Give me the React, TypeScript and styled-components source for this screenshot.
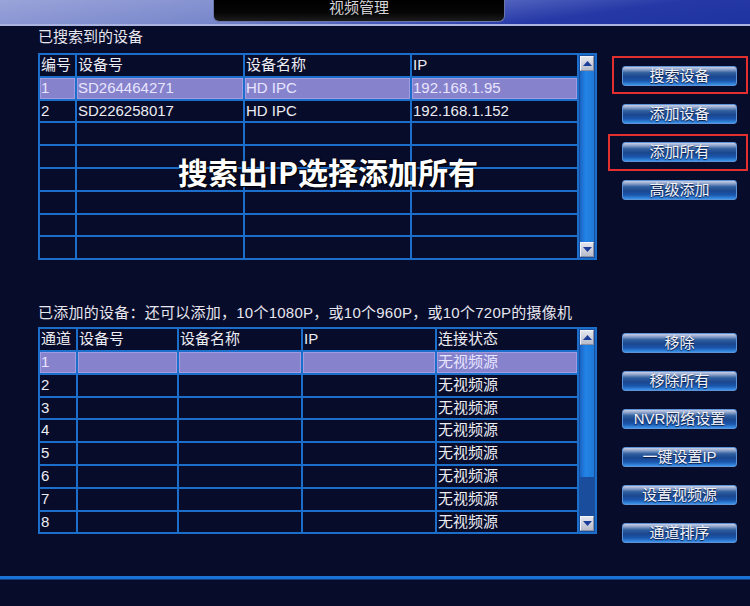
import React from "react";
import styled, { createGlobalStyle } from "styled-components";

const GlobalStyle = createGlobalStyle`
  html, body {
    margin: 0;
    padding: 0;
    background: #080c2b;
    overflow: hidden;
  }
  body {
    font-family: "Liberation Sans", "Noto Sans CJK SC", sans-serif;
  }
`;

const LINE = "#1b6fca";
const FONT = `"Liberation Sans", "Noto Sans CJK SC", sans-serif`;

const Page = styled.div`
  width: 750px;
  height: 606px;
  background: #080c2b;
  display: flex;
  flex-direction: column;
  overflow: hidden;
`;

const Header = styled.div`
  height: 24px;
  flex-shrink: 0;
  padding-left: 213px;
  background: linear-gradient(172deg, #9aa4da 0%, #7887cb 40%, #4a5cba 58%, #2538a6 75%, #1f33a0 100%);
  border-bottom: 2px solid #aab3e0;
  display: flex;
  align-items: flex-start;
`;

const TitleTab = styled.div`
  width: 292px;
  height: 22px;
  box-sizing: border-box;
  background: linear-gradient(to bottom, #000 0%, #050505 60%, #1c1c1e 100%);
  border: 1px solid #6a76a8;
  border-top: none;
  border-radius: 0 0 6px 6px;
  display: flex;
  justify-content: center;
  color: #d4d4d8;
  font-family: ${FONT};
  font-size: 15px;
  line-height: 15px;
`;

const Content = styled.div`
  padding: 1px 0 0 38px;
  display: flex;
  flex-direction: column;
`;

const Section = styled.div<{ $top: number }>`
  display: flex;
  align-items: flex-start;
  margin-top: ${(p) => p.$top}px;
`;

const LeftColumn = styled.div`
  width: 559px;
  display: flex;
  flex-direction: column;
`;

const SectionLabel = styled.div<{ $gap: number; $spacing?: number }>`
  height: 20px;
  line-height: 20px;
  margin-bottom: ${(p) => p.$gap}px;
  color: #e6e6ee;
  font-family: ${FONT};
  font-size: 15px;
  letter-spacing: ${(p) => p.$spacing ?? 0}px;
  white-space: nowrap;
`;

const TableFrame = styled.div`
  position: relative;
  display: flex;
  align-items: stretch;
`;

const Grid = styled.div<{ $cols: string }>`
  width: 541px;
  box-sizing: border-box;
  display: grid;
  grid-template-columns: ${(p) => p.$cols};
  grid-auto-rows: 20.8px;
  gap: 2px;
  padding: 2px;
  background: ${LINE};
`;

const Cell = styled.div<{ $selected?: boolean }>`
  background: ${(p) => (p.$selected ? "#8782cc" : "#080c2b")};
  box-shadow: ${(p) => (p.$selected ? "inset 0 0 0 1px #a19ce2" : "none")};
  color: ${(p) => (p.$selected ? "#e8e6ff" : "#ececf2")};
  font-family: ${FONT};
  font-size: 15px;
  line-height: 20.8px;
  padding-left: 1px;
  white-space: nowrap;
  overflow: hidden;
`;

const ScrollBar = styled.div`
  width: 18px;
  box-sizing: border-box;
  border: 2px solid ${LINE};
  border-left: none;
  background: #1a4e9c;
  display: flex;
  flex-direction: column;
  padding: 1px;
`;

const ScrollButton = styled.div`
  height: 15px;
  flex-shrink: 0;
  background: linear-gradient(to bottom, #e4e6ee, #b8bccb);
  border: 1px solid #f4f4f8;
  border-right-color: #8a8ea0;
  border-bottom-color: #8a8ea0;
  box-sizing: border-box;
  display: flex;
  align-items: center;
  justify-content: center;
`;

const Track = styled.div`
  flex: 1;
  display: flex;
  flex-direction: column;
`;

const Thumb = styled.div<{ $size?: number }>`
  ${(p) => (p.$size ? `height: ${p.$size}px;` : "flex: 1;")}
  background: linear-gradient(to right, #1a64c4, #2383e6 40%, #1f7ad8);
`;

const Overlay = styled.div`
  position: absolute;
  left: 140px;
  top: 103px;
  color: #ffffff;
  font-family: "Noto Sans CJK SC", sans-serif;
  font-weight: 700;
  font-size: 30px;
  line-height: 30px;
  white-space: nowrap;
  text-shadow: 0 0 2px #000, 1px 1px 1px #000;
  pointer-events: none;
`;

const ButtonColumn = styled.div<{ $top: number }>`
  margin-left: 25px;
  padding-top: ${(p) => p.$top}px;
  display: flex;
  flex-direction: column;
  gap: 18px;
`;

const ButtonSlot = styled.div`
  position: relative;
`;

const ActionButton = styled.div`
  width: 115px;
  height: 20px;
  box-sizing: border-box;
  border: 1px solid #5f93d8;
  border-radius: 3px;
  background: linear-gradient(
    to bottom,
    #c8d0e4 0%,
    #8ea3cc 14%,
    #31609f 32%,
    #1a468f 55%,
    #1b57ae 78%,
    #3b93ea 100%
  );
  color: #f2f4fa;
  font-family: ${FONT};
  font-size: 15px;
  line-height: 18px;
  text-align: center;
  text-shadow: 0 1px 1px #0a1a40;
  white-space: nowrap;
`;

const Highlight = styled.div<{ $t: number; $r: number; $b: number; $l: number }>`
  position: absolute;
  top: -${(p) => p.$t}px;
  right: -${(p) => p.$r}px;
  bottom: -${(p) => p.$b}px;
  left: -${(p) => p.$l}px;
  border: 2px solid #e2302e;
  pointer-events: none;
`;

const Footer = styled.div`
  margin-top: 33px;
  height: 3px;
  background: #1c72d2;
  box-shadow: 0 1px 0 #0e3d80;
`;

const Arrow = ({ up }: { up?: boolean }) => (
  <svg width="9" height="5" viewBox="0 0 9 5">
    <polygon points={up ? "0,5 9,5 4.5,0" : "0,0 9,0 4.5,5"} fill="#1c3c9a" />
  </svg>
);

type TableProps = {
  cols: string;
  header: string[];
  rows: string[][];
  selected: number;
  thumb?: number;
  children?: React.ReactNode;
};

function DataTable({ cols, header, rows, selected, thumb, children }: TableProps) {
  return (
    <TableFrame>
      <Grid $cols={cols}>
        {header.map((h, i) => (
          <Cell key={`h${i}`}>{h}</Cell>
        ))}
        {rows.map((row, r) =>
          row.map((v, c) => (
            <Cell key={`${r}-${c}`} $selected={r === selected}>
              {v}
            </Cell>
          ))
        )}
      </Grid>
      <ScrollBar>
        <ScrollButton>
          <Arrow up />
        </ScrollButton>
        <Track>
          <Thumb $size={thumb} />
        </Track>
        <ScrollButton>
          <Arrow />
        </ScrollButton>
      </ScrollBar>
      {children}
    </TableFrame>
  );
}

const searched: string[][] = [
  ["1", "SD264464271", "HD IPC", "192.168.1.95"],
  ["2", "SD226258017", "HD IPC", "192.168.1.152"],
  ...Array.from({ length: 6 }, () => ["", "", "", ""]),
];

const added: string[][] = Array.from({ length: 8 }, (_, i) => [
  String(i + 1),
  "",
  "",
  "",
  "无视频源",
]);

const topButtons = [
  { label: "搜索设备", mark: { t: 10, r: 11, b: 8, l: 10 } },
  { label: "添加设备" },
  { label: "添加所有", mark: { t: 8, r: 11, b: 9, l: 14 } },
  { label: "高级添加" },
];

const bottomButtons = ["移除", "移除所有", "NVR网络设置", "一键设置IP", "设置视频源", "通道排序"];

export default function App() {
  return (
    <Page>
      <GlobalStyle />
      <Header>
        <TitleTab>视频管理</TitleTab>
      </Header>
      <Content>
        <Section $top={0}>
          <LeftColumn>
            <SectionLabel $gap={6}>已搜索到的设备</SectionLabel>
            <DataTable
              cols="35px 166px 165px 165px"
              header={["编号", "设备号", "设备名称", "IP"]}
              rows={searched}
              selected={0}
            >
              <Overlay>搜索出IP选择添加所有</Overlay>
            </DataTable>
          </LeftColumn>
          <ButtonColumn $top={39}>
            {topButtons.map((b) => (
              <ButtonSlot key={b.label}>
                <ActionButton>{b.label}</ActionButton>
                {b.mark && <Highlight $t={b.mark.t} $r={b.mark.r} $b={b.mark.b} $l={b.mark.l} />}
              </ButtonSlot>
            ))}
          </ButtonColumn>
        </Section>
        <Section $top={43}>
          <LeftColumn>
            <SectionLabel $gap={4} $spacing={0.25}>
              已添加的设备：还可以添加，10个1080P，或10个960P，或10个720P的摄像机
            </SectionLabel>
            <DataTable
              cols="36px 99px 122px 132px 140px"
              header={["通道", "设备号", "设备名称", "IP", "连接状态"]}
              rows={added}
              selected={0}
              thumb={132}
            />
          </LeftColumn>
          <ButtonColumn $top={30}>
            {bottomButtons.map((label) => (
              <ButtonSlot key={label}>
                <ActionButton>{label}</ActionButton>
              </ButtonSlot>
            ))}
          </ButtonColumn>
        </Section>
      </Content>
      <Footer />
    </Page>
  );
}
